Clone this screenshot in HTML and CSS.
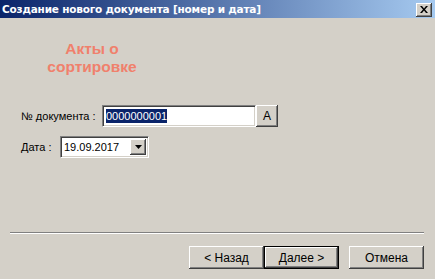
FILE: index.html
```html
<!DOCTYPE html>
<html lang="ru">
<head>
<meta charset="UTF-8" />
<title>Создание нового документа</title>
<link rel="stylesheet" href="styles.css">
</head>
<body>

<div class="window">
  <header class="titlebar">
    <span class="title">Создание нового документа [номер и дата]</span>
    <button class="close-btn" aria-label="Закрыть">
      <svg width="8" height="7" viewBox="0 0 8 7">
        <path d="M0 0h2l2 2.5 2-2.5h2l-3 3.5 3 3.5h-2l-2-2.5-2 2.5h-2l3-3.5z" fill="#000"/>
      </svg>
    </button>
  </header>

  <main class="content">
    <h1 class="heading">Акты о<br>сортировке</h1>

    <section class="form">
      <div class="row">
        <label class="label label-doc" for="doc-number">№ документа :</label>
        <div class="field field-doc">
          <span class="selected">0000000001</span>
        </div>
        <button class="btn btn-small">А</button>
      </div>
      <div class="row row-date">
        <label class="label label-date">Дата :</label>
        <div class="field field-date">
          <span class="date-text">19.09.2017</span>
          <span class="drop-btn">
            <svg width="7" height="4" viewBox="0 0 7 4"><path d="M0 0h7l-3.5 4z" fill="#000"/></svg>
          </span>
        </div>
      </div>
    </section>

    <hr class="separator">

    <footer class="actions">
      <button class="btn btn-wide">&lt; Назад</button>
      <button class="btn btn-wide btn-default">Далее &gt;</button>
      <button class="btn btn-wide btn-cancel">Отмена</button>
    </footer>
  </main>
</div>

</body>
</html>
```

FILE: styles.css
```css
body {
  margin: 0;
  padding: 0;
  background: #d4d0c8;
  font-family: 'Liberation Sans', Arial, sans-serif;
  font-size: 11px;
  color: #000;
}
.window {
  width: 435px;
  height: 279px;
  overflow: hidden;
}
.titlebar {
  height: 18px;
  display: flex;
  align-items: center;
  justify-content: space-between;
  padding: 0 3px 0 2px;
  background: linear-gradient(to right, #0a246a, #a6caf0);
}
.title {
  color: #fff;
  font-family: 'DejaVu Sans', sans-serif;
  font-weight: bold;
  font-size: 10.5px;
  letter-spacing: -0.2px;
  white-space: nowrap;
}
.close-btn {
  width: 16px;
  height: 14px;
  padding: 0;
  margin-top: 1px;
  background: #d4d0c8;
  border: none;
  box-shadow: inset -1px -1px #404040, inset 1px 1px #fff, inset -2px -2px #808080;
  display: flex;
  align-items: center;
  justify-content: center;
}
.heading {
  margin: 22px 0 0 0;
  width: 184px;
  text-align: center;
  font-family: 'Liberation Sans', Arial, sans-serif;
  font-size: 15.5px;
  line-height: 18px;
  font-weight: bold;
  color: #f0806c;
}
.form {
  margin-top: 29px;
  display: flex;
  flex-direction: column;
  gap: 9px;
}
.row {
  display: flex;
  align-items: center;
  height: 22px;
}
.label {
  padding-left: 21px;
  box-sizing: border-box;
}
.label-doc { width: 102px; }
.label-date { width: 60px; }
.field {
  height: 22px;
  box-sizing: border-box;
  background: #fff;
  border: 1px solid;
  border-color: #808080 #fff #fff #808080;
  box-shadow: inset 1px 1px #404040, inset -1px -1px #d4d0c8;
  display: flex;
  align-items: center;
}
.field-doc {
  width: 154px;
  padding-left: 3px;
}
.selected {
  background: #0a246a;
  color: #fff;
  line-height: 14px;
}
.field-date {
  width: 89px;
  padding: 2px;
  justify-content: space-between;
  align-items: stretch;
}
.date-text {
  display: flex;
  align-items: center;
  padding-left: 1px;
}
.drop-btn {
  width: 16px;
  background: #d4d0c8;
  box-shadow: inset -1px -1px #404040, inset 1px 1px #fff, inset -2px -2px #808080;
  display: flex;
  align-items: center;
  justify-content: center;
}
.btn {
  font-family: 'Liberation Sans', Arial, sans-serif;
  font-size: 12px;
  color: #000;
  background: #d4d0c8;
  border: none;
  padding: 0;
  box-shadow: inset -1px -1px #404040, inset 1px 1px #fff, inset -2px -2px #808080;
}
.btn-small {
  width: 22px;
  height: 22px;
}
.separator {
  margin: 74px 0 0 10px;
  width: 414px;
  height: 0;
  border: none;
  border-top: 1px solid #808080;
  border-bottom: 1px solid #fff;
}
.actions {
  margin-top: 12px;
  padding-left: 189px;
  display: flex;
}
.btn-wide {
  width: 75px;
  height: 23px;
}
.btn-default {
  box-shadow: inset 0 0 0 1px #000, inset -2px -2px #404040, inset 2px 2px #fff, inset -3px -3px #808080;
}
.btn-cancel {
  margin-left: 10px;
}
```
